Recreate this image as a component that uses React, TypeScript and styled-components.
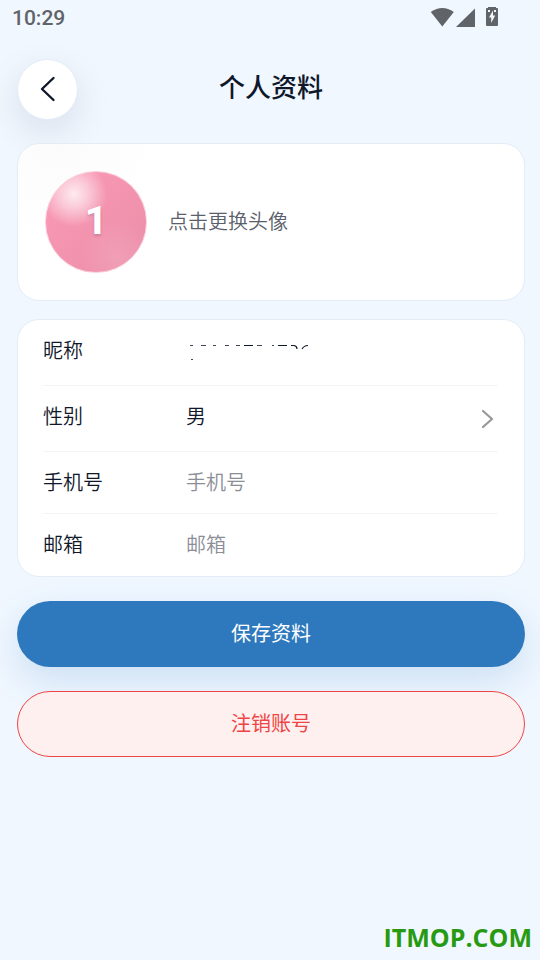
import React from "react";
import styled, { createGlobalStyle, css } from "styled-components";

const Global = createGlobalStyle`
  * { box-sizing: border-box; }
  body {
    margin: 0;
    background: #f0f7ff;
    color: #0f172a;
    font-family: Roboto, "Noto Sans CJK SC", sans-serif;
  }
  button, input { font: inherit; color: inherit; }
`;

const Screen = styled.div`
  display: flex;
  flex-direction: column;
  min-height: 100vh;
`;

const StatusBar = styled.div`
  display: flex;
  align-items: center;
  justify-content: space-between;
  height: 36px;
  padding: 0 40px 0 12px;
  color: #606367;
  font-size: 21px;
  font-weight: 500;
`;

const StatusIcons = styled.svg`
  display: block;
  width: 70px;
  height: 36px;
`;

const Header = styled.header`
  display: grid;
  grid-template-columns: 61px 1fr 61px;
  align-items: center;
  padding: 23px 15px 0 17px;
`;

const BackButton = styled.button`
  display: grid;
  place-items: center;
  width: 61px;
  height: 61px;
  padding: 0;
  border: 1px solid #e3edf7;
  border-radius: 50%;
  background: #ffffff;
  box-shadow: 0 12px 36px rgba(15, 23, 42, 0.1);
`;

const Title = styled.h1`
  margin: 0;
  padding-bottom: 4px;
  font-size: 26px;
  line-height: 36px;
  font-weight: 500;
  text-align: center;
`;

const Content = styled.main`
  display: flex;
  flex-direction: column;
  padding: 23px 15px 0 17px;
`;

const card = css`
  border: 1px solid #e2edf7;
  border-radius: 22px;
  background: #ffffff;
`;

const AvatarCard = styled.button`
  ${card}
  display: flex;
  align-items: center;
  gap: 21px;
  height: 158px;
  padding: 0 27px;
  background: radial-gradient(circle at 8% 0, #fbfbfc, #ffffff 100px);
  text-align: left;
`;

const Avatar = styled.span`
  display: grid;
  place-items: center;
  width: 102px;
  height: 102px;
  padding-bottom: 2px;
  border: 1px solid #fbcfdc;
  border-radius: 50%;
  background:
    radial-gradient(circle at 28% 22%, rgba(255, 255, 255, 0.8), rgba(255, 255, 255, 0.45) 15%, rgba(255, 255, 255, 0) 31%),
    radial-gradient(circle at 72% 86%, rgba(255, 255, 255, 0.14), rgba(255, 255, 255, 0) 34%),
    linear-gradient(135deg, #fb9ab6, #eb8da8);
  color: #ffffff;
  font-size: 39px;
  line-height: 48px;
  font-weight: 800;
  text-shadow: 0 2px 3px rgba(15, 23, 42, 0.18);
`;

const Hint = styled.span`
  color: #5b5f6b;
  font-size: 20px;
  line-height: 28px;
  font-weight: 350;
`;

const Form = styled.form`
  display: flex;
  flex-direction: column;
`;

const FieldCard = styled.div`
  ${card}
  margin-top: 18px;
  padding: 0 26px 0 25px;
`;

const Row = styled.div<{ $tall?: boolean }>`
  display: grid;
  grid-template-columns: 143px 1fr auto;
  align-items: center;
  height: ${({ $tall }) => ($tall ? "66px" : "62px")};
  padding-bottom: ${({ $tall }) => ($tall ? "4px" : "0")};
  border-bottom: 1px solid #f3f4f6;
  font-size: 20px;
  line-height: 28px;
  font-weight: 350;

  &:last-child {
    border-bottom: 0;
  }
`;

const NameBox = styled.div`
  position: relative;
  height: 28px;
`;

const NameMarks = styled.svg`
  position: absolute;
  left: 0;
  top: 0;
  pointer-events: none;
`;

const TextInput = styled.input`
  width: 100%;
  height: 28px;
  padding: 0;
  border: 0;
  outline: 0;
  background: transparent;

  &::placeholder {
    color: #8b8e97;
    opacity: 1;
  }
`;

const Picker = styled.select`
  width: 100%;
  height: 28px;
  padding: 0;
  border: 0;
  outline: 0;
  appearance: none;
  background: transparent;
  color: inherit;
  font: inherit;
`;

const Chevron = styled.svg`
  display: block;
  margin: 4px 4px 0 0;
`;

const Action = styled.button<{ $danger?: boolean }>`
  height: 66px;
  margin-top: 24px;
  padding: 0;
  border: ${({ $danger }) => ($danger ? "1px solid #ef4444" : "0")};
  border-radius: 33px;
  background: ${({ $danger }) => ($danger ? "#fff0f0" : "#2e79bd")};
  color: ${({ $danger }) => ($danger ? "#ef4444" : "#ffffff")};
  box-shadow: ${({ $danger }) => ($danger ? "none" : "0 14px 36px rgba(46, 121, 189, 0.18)")};
  font-size: 20px;
  line-height: 28px;
`;

const Watermark = styled.footer`
  margin-top: auto;
  padding: 0 8px 6px 0;
  color: #279a12;
  font-family: "Open Sans", sans-serif;
  font-size: 25px;
  line-height: 34px;
  font-weight: 700;
  text-align: right;
`;

export default function App() {
  return (
    <Screen>
      <Global />
      <StatusBar>
        <time>10:29</time>
        <StatusIcons viewBox="0 0 70 36" fill="currentColor" aria-hidden="true">
          <path d="M0.8 12Q12.3 4 23.8 12L12.3 26.5Z" />
          <path d="M45 8.5V27H26Z" />
          <path
            fillRule="evenodd"
            d="M58 7H66V8H67Q68 8 68 9V25Q68 26 67 26H57Q56 26 56 25V9Q56 8 57 8H58ZM58 10V12H60V10ZM64 10V12H66V10ZM63 10.5L59 17.5H61.2V23L65.2 15.5H63Z"
          />
        </StatusIcons>
      </StatusBar>

      <Header>
        <BackButton type="button" aria-label="返回">
          <svg width="24" height="28" viewBox="0 0 24 28" fill="none" stroke="currentColor" strokeWidth="2.4" strokeLinecap="round" strokeLinejoin="round">
            <path d="M17.5 2L6 13L17.5 24" />
          </svg>
        </BackButton>
        <Title>个人资料</Title>
      </Header>

      <Content>
        <AvatarCard type="button">
          <Avatar>1</Avatar>
          <Hint>点击更换头像</Hint>
        </AvatarCard>

        <Form>
          <FieldCard>
            <Row $tall>
              <label htmlFor="nickname">昵称</label>
              <NameBox>
                <TextInput id="nickname" />
                <NameMarks width="124" height="28" viewBox="0 0 124 28" fill="none" stroke="currentColor" strokeWidth="1" aria-hidden="true">
                  <path d="M4 8.5h3M15 8.5h5M27 8.5h3M39 8.5h4M50 8.5h4M71 8.5h5M86 8.5h2M5 22.5h2" opacity="0.8" />
                  <path d="M58 8.5h9M92 8.5h9" />
                  <path d="M105 8.5h3Q111 9 111 12M116 12Q118 8.5 122 8.5" strokeWidth="1.2" />
                </NameMarks>
              </NameBox>
            </Row>
            <Row $tall>
              <label htmlFor="gender">性别</label>
              <Picker id="gender" defaultValue="男">
                <option>男</option>
                <option>女</option>
              </Picker>
              <Chevron width="13" height="20" viewBox="0 0 13 20" fill="none" stroke="#979797" strokeWidth="2.2" strokeLinecap="round" strokeLinejoin="round" aria-hidden="true">
                <path d="M2 2L11 10L2 18" />
              </Chevron>
            </Row>
            <Row>
              <label htmlFor="phone">手机号</label>
              <TextInput id="phone" type="tel" placeholder="手机号" />
            </Row>
            <Row>
              <label htmlFor="email">邮箱</label>
              <TextInput id="email" type="email" placeholder="邮箱" />
            </Row>
          </FieldCard>
          <Action type="button">保存资料</Action>
          <Action type="button" $danger>注销账号</Action>
        </Form>
      </Content>
      <Watermark>ITMOP.COM</Watermark>
    </Screen>
  );
}
